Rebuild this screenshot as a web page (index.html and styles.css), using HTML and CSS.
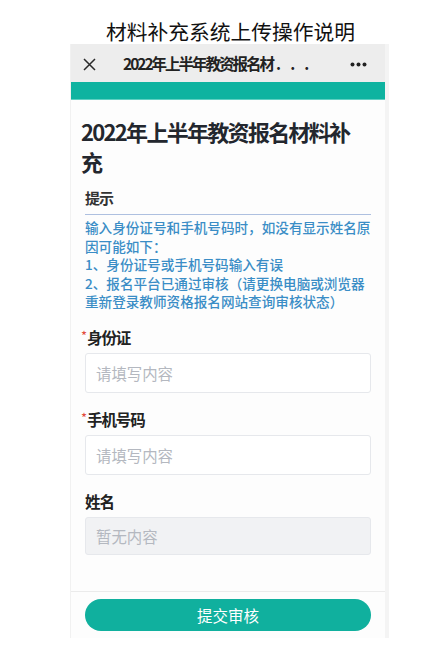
FILE: index.html
```html
<!DOCTYPE html>
<html lang="zh-CN">
<head>
<meta charset="utf-8">
<title>材料补充系统上传操作说明</title>
<link rel="stylesheet" href="styles.css">
</head>
<body>
<div class="page-title">材料补充系统上传操作说明</div>
<div class="phone">
  <div class="screen">
    <div class="navbar">
      <svg class="close" width="13" height="13" viewBox="0 0 13 13"><path d="M1 1L12 12M12 1L1 12" stroke="#2a2a2a" stroke-width="1.5" fill="none"/></svg>
      <div class="nav-title">2022年上半年教资报名材<span class="ell">...</span></div>
      <svg class="more" width="17" height="5" viewBox="0 0 17 5"><circle cx="2.5" cy="2.5" r="2" fill="#222"/><circle cx="8.5" cy="2.5" r="2" fill="#222"/><circle cx="14.5" cy="2.5" r="2" fill="#222"/></svg>
    </div>
    <div class="topbar"></div>
    <div class="content">
      <h1 class="heading">2022年上半年教资报名材料补<br>充</h1>
      <div class="tip">
        <div class="tip-title">提示</div>
        <p class="tip-text">输入身份证号和手机号码时，如没有显示姓名原<br>因可能如下：<br>1、身份证号或手机号码输入有误<br>2、报名平台已通过审核（请更换电脑或浏览器<br>重新登录教师资格报名网站查询审核状态）</p>
      </div>
      <div class="field">
        <div class="label"><span class="req">*</span>身份证</div>
        <div class="input">请填写内容</div>
      </div>
      <div class="field">
        <div class="label"><span class="req">*</span>手机号码</div>
        <div class="input">请填写内容</div>
      </div>
      <div class="field">
        <div class="label plain">姓名</div>
        <div class="input disabled">暂无内容</div>
      </div>
    </div>
    <div class="footer">
      <div class="submit">提交审核</div>
    </div>
  </div>
</div>
</body>
</html>
```

FILE: styles.css
```css
* { box-sizing: border-box; }
html, body { margin: 0; padding: 0; background: #fff; }
body { font-family: "Noto Sans CJK SC", "Noto Sans", sans-serif; color: #222; }

.page-title {
  height: 44px;
  padding-left: 106px;
  padding-top: 19px;
  font-size: 20.75px;
  line-height: 24px;
  font-weight: 400;
  color: #111;
  white-space: nowrap;
}

.phone {
  margin-left: 70px;
  width: 319px;
  height: 594px;
  border-left: 1px solid #f1f1f1;
  border-right: 4px solid #f4f4f4;
}
.screen {
  display: flex;
  flex-direction: column;
  height: 100%;
  background: #fdfdfd;
}

.navbar {
  height: 38px;
  background: #ededed;
  display: flex;
  align-items: center;
  padding-left: 12px;
  padding-right: 18px;
}
.close { flex: none; margin-top: 2px; }
.nav-title {
  flex: 1;
  margin-left: 27px;
  font-size: 15.5px;
  font-weight: 700;
  letter-spacing: -2px;
  color: #222;
  white-space: nowrap;
  line-height: 20px;
}
.ell { letter-spacing: 9px; margin-left: 3px; }
.more { flex: none; margin-top: 2px; }

.topbar { height: 18px; background: #0eb3a0; border-bottom: 1px solid #5fd0c2; }

.content {
  flex: 1;
  padding: 16px 14px 0 10px;
}
.heading {
  margin: 0;
  font-size: 22px;
  line-height: 30px;
  font-weight: 700;
  letter-spacing: -1.7px;
  color: #23272e;
  white-space: nowrap;
}
.tip { margin: 12px 0 0 4px; }
.tip-title {
  font-size: 15px;
  line-height: 20px;
  font-weight: 700;
  letter-spacing: -1.1px;
  color: #333;
  padding-bottom: 6px;
  border-bottom: 1.5px solid #aec0e0;
}
.tip-text {
  margin: 3px 0 0 0;
  font-size: 13.6px;
  line-height: 18.5px;
  font-weight: 500;
  color: #3a8dc6;
  white-space: nowrap;
}

.field { margin-top: 16px; }
.label {
  font-size: 15.5px;
  line-height: 20px;
  font-weight: 700;
  letter-spacing: -1.1px;
  color: #222;
  display: flex;
  align-items: center;
}
.label.plain { padding-left: 4px; }
.req {
  color: #e24a3b;
  font-size: 13px;
  font-weight: 400;
  letter-spacing: 0;
  width: 6px;
  position: relative;
  top: -1px;
}
.input {
  margin: 6px 0 0 4px;
  height: 40px;
  border: 1px solid #e6e8ec;
  border-radius: 3px;
  background: #fff;
  padding-left: 10px;
  display: flex;
  align-items: center;
  font-size: 15.4px;
  color: #b4b8c0;
}
.input.disabled { background: #f1f2f4; height: 38px; }

.footer {
  height: 47px;
  border-top: 1px solid #ebebeb;
  padding: 7px 14px 0 14px;
}
.submit {
  height: 32px;
  border-radius: 16px;
  background: #10b09e;
  color: #fff;
  font-size: 15.5px;
  display: flex;
  align-items: center;
  justify-content: center;
}
```
